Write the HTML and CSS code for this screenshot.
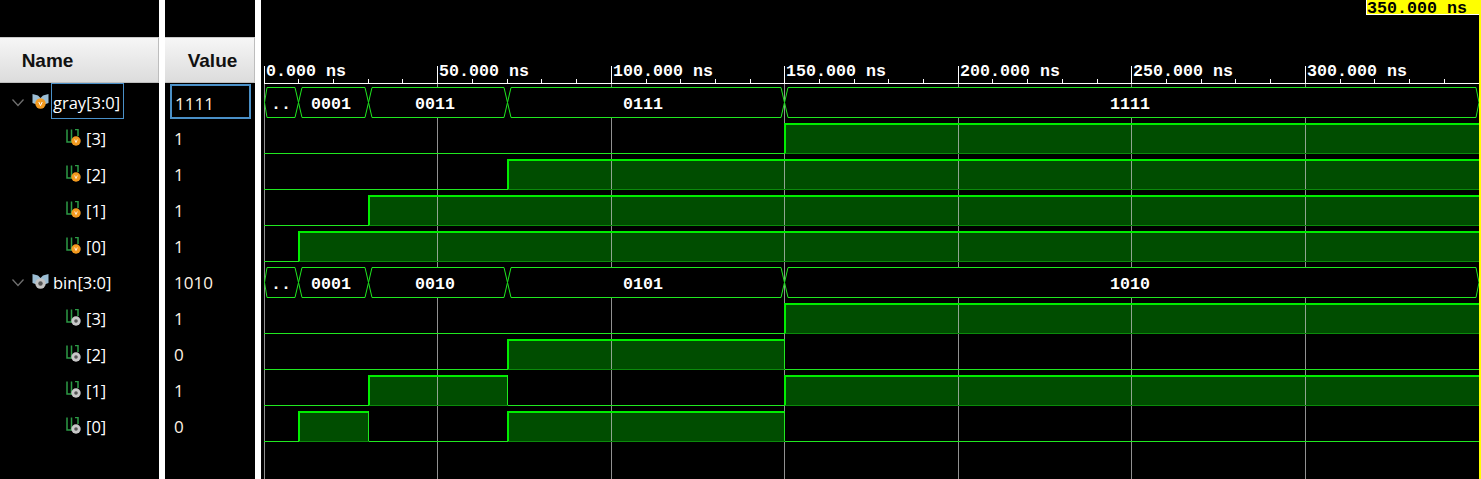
FILE: index.html
```html
<!DOCTYPE html>
<html lang="en">
<head>
<meta charset="utf-8">
<title>Waveform</title>
<link rel="stylesheet" href="styles.css">
</head>
<body>
<svg class="defs" width="0" height="0" aria-hidden="true">
  <defs>
    <symbol id="chev" viewBox="0 0 14 10"><path d="M1.5 1.5 L7 7.5 L12.5 1.5" fill="none" stroke="#6f6f6f" stroke-width="1.3"/></symbol>
    <symbol id="bus-o" viewBox="0 0 17 17">
      <path d="M0.5 1 L6 2.5 L8.5 5 L11 2.5 L16.5 1 V10 L11 12 H6 L0.5 10 Z" fill="#9bbdd4"/>
      <circle cx="8.5" cy="10.5" r="5.2" fill="#f39a1f"/><path d="M6.8 9 L8.5 12.6 L10.2 9" fill="none" stroke="#fff" stroke-width="1"/>
    </symbol>
    <symbol id="bus-g" viewBox="0 0 17 17">
      <path d="M0.5 1 L6 2.5 L8.5 5 L11 2.5 L16.5 1 V10 L11 12 H6 L0.5 10 Z" fill="#9bbdd4"/>
      <circle cx="8.5" cy="10.5" r="5.2" fill="#c2c2c2"/><circle cx="8.5" cy="10.5" r="2.2" fill="#555"/>
    </symbol>
    <symbol id="sig-o" viewBox="0 0 15 17">
      <path d="M1 0.5 V13 H5.5 V0.5 M9 0.5 H12 V7" fill="none" stroke="#2c9a45" stroke-width="1.5"/>
      <circle cx="10" cy="12" r="4.7" fill="#f39a1f"/><path d="M8.7 10.5 L10 13.5 L11.3 10.5" fill="none" stroke="#fff" stroke-width=".8"/>
    </symbol>
    <symbol id="sig-g" viewBox="0 0 15 17">
      <path d="M1 0.5 V13 H5.5 V0.5 M9 0.5 H12 V7" fill="none" stroke="#2c9a45" stroke-width="1.5"/>
      <circle cx="10" cy="12" r="4.7" fill="#c8c8c8"/><circle cx="10" cy="12" r="1.8" fill="#555"/>
    </symbol>
  </defs>
</svg>

<main class="app">
  <section class="col col-name">
    <div class="head">Name</div>
    <div class="rows">
      <div class="row bus"><svg class="chev"><use href="#chev"/></svg><svg class="bus-icon"><use href="#bus-o"/></svg><span class="label selected">gray[3:0]</span></div>
      <div class="row bit"><svg class="bit-icon"><use href="#sig-o"/></svg><span class="label">[3]</span></div>
      <div class="row bit"><svg class="bit-icon"><use href="#sig-o"/></svg><span class="label">[2]</span></div>
      <div class="row bit"><svg class="bit-icon"><use href="#sig-o"/></svg><span class="label">[1]</span></div>
      <div class="row bit"><svg class="bit-icon"><use href="#sig-o"/></svg><span class="label">[0]</span></div>
      <div class="row bus"><svg class="chev"><use href="#chev"/></svg><svg class="bus-icon"><use href="#bus-g"/></svg><span class="label">bin[3:0]</span></div>
      <div class="row bit"><svg class="bit-icon"><use href="#sig-g"/></svg><span class="label">[3]</span></div>
      <div class="row bit"><svg class="bit-icon"><use href="#sig-g"/></svg><span class="label">[2]</span></div>
      <div class="row bit"><svg class="bit-icon"><use href="#sig-g"/></svg><span class="label">[1]</span></div>
      <div class="row bit"><svg class="bit-icon"><use href="#sig-g"/></svg><span class="label">[0]</span></div>
    </div>
  </section>
  <div class="divider"></div>
  <section class="col col-value">
    <div class="head">Value</div>
    <div class="rows">
      <div class="row val selected-val">1111</div>
      <div class="row val">1</div>
      <div class="row val">1</div>
      <div class="row val">1</div>
      <div class="row val">1</div>
      <div class="row val">1010</div>
      <div class="row val">1</div>
      <div class="row val">0</div>
      <div class="row val">1</div>
      <div class="row val">0</div>
    </div>
  </section>
  <div class="divider"></div>
  <svg class="wave" viewBox="261 0 1220 479" width="1220" height="479" shape-rendering="crispEdges">
    <!-- filled high regions -->
    <g class="fill">
      <rect x="785" y="124" width="694" height="29"/>
      <rect x="508" y="160" width="971" height="29"/>
      <rect x="369" y="196" width="1110" height="29"/>
      <rect x="299" y="232" width="1180" height="29"/>
      <rect x="785" y="304" width="694" height="29"/>
      <rect x="508" y="340" width="277" height="29"/>
      <rect x="369" y="376" width="139" height="29"/>
      <rect x="785" y="376" width="694" height="29"/>
      <rect x="299" y="412" width="70" height="29"/>
      <rect x="508" y="412" width="277" height="29"/>
    </g>
    <!-- grid -->
    <path class="grid" d="M264.5 84V479M437.5 84V479M611.5 84V479M784.5 84V479M958.5 84V479M1131.5 84V479M1305.5 84V479"/>
    <!-- low edges of high regions -->
    <path class="edge-dim" d="M785 153.5H1479M508 189.5H1479M369 225.5H1479M299 261.5H1479M785 333.5H1479M508 369.5H785M369 405.5H508M785 405.5H1479M299 441.5H369M508 441.5H785"/>
    <!-- digital traces -->
    <path class="trace" d="M264 153.5H784.5"/>
    <path class="trace" d="M264 189.5H507.5"/>
    <path class="trace" d="M264 225.5H368.5"/>
    <path class="trace" d="M264 261.5H298.5"/>
    <path class="trace" d="M264 333.5H784.5"/>
    <path class="trace" d="M264 369.5H507.5M784.5 369.5H1479"/>
    <path class="trace" d="M264 405.5H368.5M507.5 405.5H784.5"/>
    <path class="trace" d="M264 441.5H298.5M368.5 441.5H507.5M784.5 441.5H1479"/>
    <path class="trace-high" d="M785 153V124H1479"/>
    <path class="trace-high" d="M508 189V160H1479"/>
    <path class="trace-high" d="M369 225V196H1479"/>
    <path class="trace-high" d="M299 261V232H1479"/>
    <path class="trace-high" d="M785 333V304H1479"/>
    <path class="trace-high" d="M508 369V340H784"/>
    <path class="trace-high" d="M369 405V376H507"/>
    <path class="trace-high" d="M785 405V376H1479"/>
    <path class="trace-high" d="M299 441V412H368"/>
    <path class="trace-high" d="M508 441V412H784"/>
    <path class="trace-thin" d="M784.5 339V369M507.5 375V405M368.5 411V441M784.5 411V441"/>
    <!-- buses -->
    <g class="bus-seg" shape-rendering="auto">
      <path d="M264.5 102.5L267 87.5H295L298.5 102.5L295 117.5H267Z"/>
      <path d="M298.5 102.5L302 87.5H365L368.5 102.5L365 117.5H302Z"/>
      <path d="M368.5 102.5L372 87.5H504L507.5 102.5L504 117.5H372Z"/>
      <path d="M507.5 102.5L511 87.5H781L784.5 102.5L781 117.5H511Z"/>
      <path d="M784.5 102.5L788 87.5H1476L1479 102.5L1476 117.5H788Z"/>
      <path d="M264.5 282.5L267 267.5H295L298.5 282.5L295 297.5H267Z"/>
      <path d="M298.5 282.5L302 267.5H365L368.5 282.5L365 297.5H302Z"/>
      <path d="M368.5 282.5L372 267.5H504L507.5 282.5L504 297.5H372Z"/>
      <path d="M507.5 282.5L511 267.5H781L784.5 282.5L781 297.5H511Z"/>
      <path d="M784.5 282.5L788 267.5H1476L1479 282.5L1476 297.5H788Z"/>
    </g>
    <g class="bus-text">
      <text x="281" y="109">..</text>
      <text x="331" y="109">0001</text>
      <text x="435" y="109">0011</text>
      <text x="643" y="109">0111</text>
      <text x="1130" y="109">1111</text>
      <text x="281" y="289">..</text>
      <text x="331" y="289">0001</text>
      <text x="435" y="289">0010</text>
      <text x="643" y="289">0101</text>
      <text x="1130" y="289">1010</text>
    </g>
    <!-- ruler -->
    <path class="ruler" d="M264 83.5H1479M264.5 66V83M437.5 66V83M611.5 66V83M784.5 66V83M958.5 66V83M1131.5 66V83M1305.5 66V83M298.5 79V83M333.5 79V83M368.5 79V83M402.5 79V83M472.5 79V83M507.5 79V83M541.5 79V83M576.5 79V83M646.5 79V83M680.5 79V83M715.5 79V83M750.5 79V83M819.5 79V83M854.5 79V83M888.5 79V83M923.5 79V83M992.5 79V83M1027.5 79V83M1062.5 79V83M1097.5 79V83M1166.5 79V83M1201.5 79V83M1235.5 79V83M1270.5 79V83M1340.5 79V83M1374.5 79V83M1409.5 79V83M1444.5 79V83"/>
    <g class="ruler-text">
      <text x="266" y="76">0.000 ns</text>
      <text x="439" y="76">50.000 ns</text>
      <text x="613" y="76">100.000 ns</text>
      <text x="786" y="76">150.000 ns</text>
      <text x="960" y="76">200.000 ns</text>
      <text x="1133" y="76">250.000 ns</text>
      <text x="1307" y="76">300.000 ns</text>
    </g>
    <!-- time cursor -->
    <rect class="cursor" x="1479" y="0" width="2" height="479"/>
    <rect class="stamp" x="1366" y="0" width="113" height="15"/>
    <path class="stamp-edge" d="M1366.5 0V15M1366 14.5H1479"/>
    <text class="stamp-text" x="1367" y="13">350.000 ns</text>
  </svg>
</main>
</body>
</html>
```
FILE: styles.css
```css
html, body {
  margin: 0;
  padding: 0;
  background: #000;
  overflow: hidden;
}

.defs { position: absolute; }

.app {
  display: flex;
  width: 1481px;
  height: 479px;
  font-family: "Open Sans", "Noto Sans", "Liberation Sans", sans-serif;
  color: #fff;
  background: #000;
}

.col { display: flex; flex-direction: column; padding-top: 37px; }
.col-name { width: 159px; }
.col-value { width: 90px; }

.divider { width: 6px; background: #fff; }

.head {
  height: 46px;
  box-sizing: border-box;
  padding-top: 2px;
  display: flex;
  align-items: center;
  justify-content: center;
  font-family: "Liberation Sans", Arial, sans-serif;
  font-size: 19px;
  font-weight: 700;
  color: #111;
  background: linear-gradient(#f6f6f6, #dcdcdc);
  border-top: 1px solid #c8c8c8;
  border-right: 1px solid #bdbdbd;
  border-bottom: 1px solid #bdbdbd;
}
.col-name .head { padding-right: 63px; }
.col-value .head { padding-left: 6px; }

.rows { display: flex; flex-direction: column; padding-top: 2px; }

.row {
  height: 36px;
  box-sizing: border-box;
  display: flex;
  align-items: center;
  font-size: 16.5px;
}

.bus { padding-left: 11px; }
.bit { padding-left: 66px; }

.chev { width: 14px; height: 10px; margin-right: 7px; }
.bus-icon { width: 17px; height: 17px; margin-right: 3px; margin-top: -4px; }
.bit-icon { width: 15px; height: 17px; margin-right: 4px; margin-top: -3px; }

.label { line-height: 34px; padding: 0 3px 0 1px; }
.label.selected {
  box-sizing: border-box;
  height: 36px;
  margin-top: -4px;
  margin-left: -1px;
  border: 1px solid #4a90c8;
  padding: 4px 3px 0 1px;
  line-height: 30px;
}

.val { padding: 0 0 1px 9px; font-size: 17px; color: #fff3e4; }
.selected-val {
  height: 35px;
  margin: -1px 4px 2px 5px;
  padding: 3px 0 0 3px;
  border: 2px solid #4a90c8;
}

.wave { display: block; flex: none; }

.fill rect { fill: #004d00; }

.grid { fill: none; stroke: #c8c8c8; stroke-opacity: .72; stroke-width: 1; }

.edge-dim { fill: none; stroke: #0b8a0b; stroke-width: 1; }
.trace { fill: none; stroke: #20e820; stroke-width: 1; }
.trace-high { fill: none; stroke: #00ee00; stroke-width: 2; }
.trace-thin { fill: none; stroke: #20e820; stroke-width: 1; }

.bus-seg path { fill: #000; stroke: #20e820; stroke-width: 1; }

.bus-text text {
  font-family: "Liberation Mono", "Courier New", monospace;
  font-size: 16.67px;
  font-weight: 700;
  fill: #fff;
  text-anchor: middle;
}

.ruler { fill: none; stroke: #fff; stroke-width: 1; }

.ruler-text text {
  font-family: "Liberation Mono", "Courier New", monospace;
  font-size: 16.67px;
  font-weight: 700;
  fill: #fff;
}

.cursor { fill: #ffff00; }
.stamp { fill: #ffff00; }
.stamp-edge { fill: none; stroke: #fff; stroke-width: 1; }
.stamp-text {
  font-family: "Liberation Mono", "Courier New", monospace;
  font-size: 16.67px;
  font-weight: 700;
  fill: #000;
}
```
